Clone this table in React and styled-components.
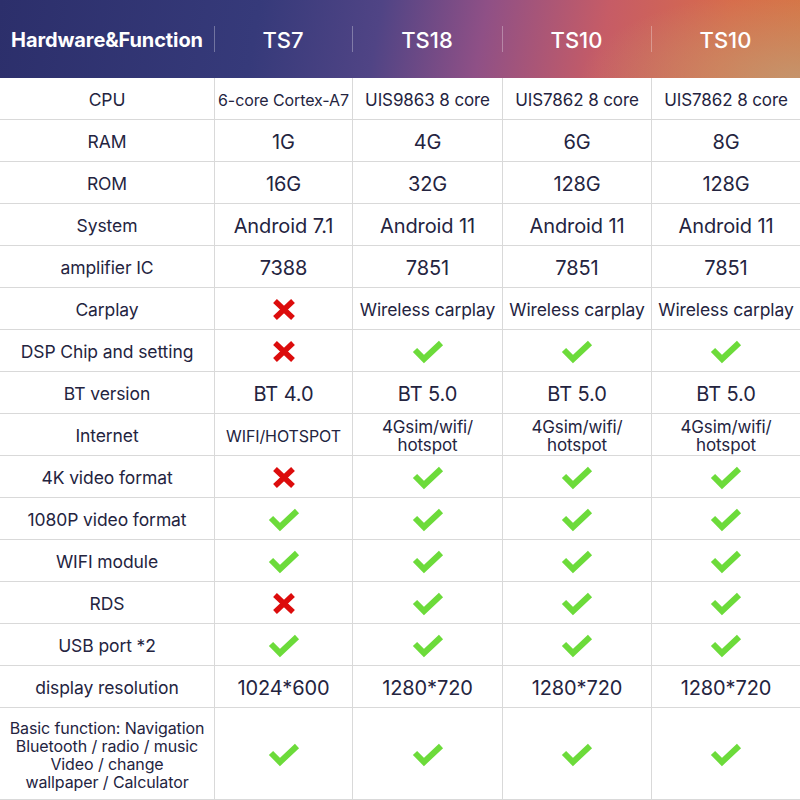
import styled, { createGlobalStyle } from "styled-components";

const Global = createGlobalStyle`
  html, body { margin: 0; padding: 0; background: #fff; }
  body { font-family: Inter, "Noto Sans", "Liberation Sans", sans-serif; }
`;

const cols = "214px 138px 150px 149px 149px";

const Table = styled.div`
  width: 800px;
  height: 800px;
  overflow: hidden;
  color: #24243f;
`;

const Head = styled.div`
  display: grid;
  grid-template-columns: ${cols};
  height: 78px;
  align-items: stretch;
  background:
    radial-gradient(ellipse 220px 90px at 800px 80px, rgba(196, 150, 110, 0.95), rgba(196, 150, 110, 0) 100%),
    linear-gradient(100deg, #2c2f6b 0%, #363a7a 32%, #504485 47%, #8f5086 60%, #c65c66 75%, #d86b4a 90%, #d77442 100%);
`;

const HeadCell = styled.div`
  position: relative;
  display: flex;
  align-items: center;
  justify-content: center;
  padding-top: 2px;
  color: #fff;
  font-size: ${(p) => (p.$first ? "20px" : "22px")};
  font-weight: ${(p) => (p.$first ? 700 : 500)};
  letter-spacing: ${(p) => (p.$first ? "-0.1px" : "0")};
  &:not(:first-child)::before {
    content: "";
    position: absolute;
    left: 0;
    top: 26px;
    height: 26px;
    width: 1px;
    background: rgba(255, 255, 255, 0.3);
  }
`;

const Row = styled.div`
  display: grid;
  grid-template-columns: ${cols};
  height: ${(p) => p.$h || 42}px;
  border-bottom: 1px solid #d9d9d9;
  box-sizing: border-box;
`;

const Cell = styled.div`
  display: flex;
  align-items: center;
  justify-content: center;
  text-align: center;
  padding: 2px 2px 0;
  border-left: ${(p) => (p.$first ? "none" : "1px solid #d9d9d9")};
  font-size: ${(p) => p.$size || 17.5}px;
  line-height: ${(p) => (p.$wrap ? "18px" : "20px")};
  white-space: ${(p) => (p.$wrap ? "normal" : "nowrap")};
  letter-spacing: -0.1px;
  overflow: hidden;
`;

const Cross = () => (
  <svg width="24" height="21" viewBox="0 0 24 21">
    <path d="M3 2 L21 19 M21 2 L3 19" stroke="#dc0c0c" strokeWidth="5.5" />
  </svg>
);

const Check = () => (
  <svg width="32" height="24" viewBox="0 0 32 24">
    <path d="M3 10 L12 19 L29 3" stroke="#6cdb3a" strokeWidth="6" fill="none" />
  </svg>
);

const X = "x";
const V = "v";

const rows = [
  ["CPU", ["6-core Cortex-A7", "UIS9863 8 core", "UIS7862 8 core", "UIS7862 8 core"], [16, 17, 17, 17]],
  ["RAM", ["1G", "4G", "6G", "8G"], 20],
  ["ROM", ["16G", "32G", "128G", "128G"], 20],
  ["System", ["Android 7.1", "Android 11", "Android 11", "Android 11"], 20],
  ["amplifier IC", ["7388", "7851", "7851", "7851"], 20],
  ["Carplay", [X, "Wireless carplay", "Wireless carplay", "Wireless carplay"], 17.5],
  ["DSP Chip and setting", [X, V, V, V]],
  ["BT version", ["BT 4.0", "BT 5.0", "BT 5.0", "BT 5.0"], 20],
  ["Internet", ["WIFI/HOTSPOT", "4Gsim/wifi/ hotspot", "4Gsim/wifi/ hotspot", "4Gsim/wifi/ hotspot"], [16, 17, 17, 17]],
  ["4K video format", [X, V, V, V]],
  ["1080P video format", [V, V, V, V]],
  ["WIFI module", [V, V, V, V]],
  ["RDS", [X, V, V, V]],
  ["USB port *2", [V, V, V, V]],
  ["display resolution", ["1024*600", "1280*720", "1280*720", "1280*720"], 20],
];

const renderValue = (v) => (v === X ? <Cross /> : v === V ? <Check /> : v);

export default function App() {
  return (
    <Table>
      <Global />
      <Head>
        <HeadCell $first>Hardware&amp;Function</HeadCell>
        <HeadCell>TS7</HeadCell>
        <HeadCell>TS18</HeadCell>
        <HeadCell>TS10</HeadCell>
        <HeadCell>TS10</HeadCell>
      </Head>
      {rows.map(([label, vals, size]) => (
        <Row key={label}>
          <Cell $first>{label}</Cell>
          {vals.map((v, i) => {
            const s = Array.isArray(size) ? size[i] : size;
            return (
              <Cell key={i} $size={s} $wrap={String(v).includes("/ ")}>
                {renderValue(v)}
              </Cell>
            );
          })}
        </Row>
      ))}
      <Row $h={92}>
        <Cell $first $wrap $size={16}>
          Basic function: Navigation<br />Bluetooth / radio / music<br />Video / change<br />wallpaper / Calculator
        </Cell>
        <Cell><Check /></Cell>
        <Cell><Check /></Cell>
        <Cell><Check /></Cell>
        <Cell><Check /></Cell>
      </Row>
    </Table>
  );
}
